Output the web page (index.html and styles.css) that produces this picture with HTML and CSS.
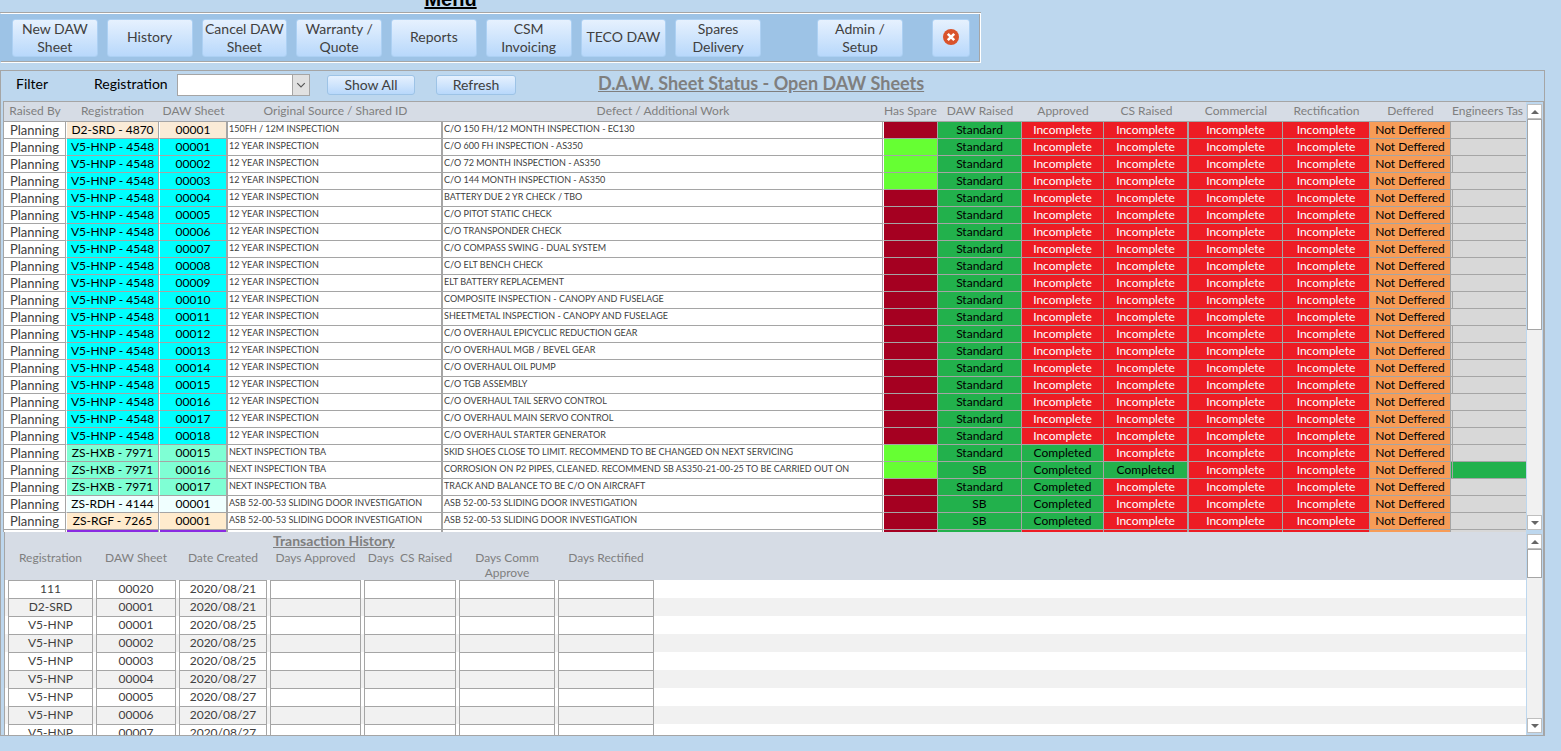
FILE: index.html
```
<!DOCTYPE html>
<html lang="en">
<head>
    <meta charset="UTF-8">
    <meta name="viewport" content="width=device-width, initial-scale=1.0">
    <title>DAW Sheets - Menu</title>
    <link rel="stylesheet" href="styles.css">
</head>
<body>
    <header class="page-title">
        <h1>Menu</h1>
    </header>

    <nav class="menu">
        <div class="menu-main">
            <button class="btn">New DAW Sheet</button>
            <button class="btn">History</button>
            <button class="btn">Cancel DAW Sheet</button>
            <button class="btn">Warranty / Quote</button>
            <button class="btn">Reports</button>
            <button class="btn">CSM Invoicing</button>
            <button class="btn">TECO DAW</button>
            <button class="btn">Spares Delivery</button>
        </div>
        <button class="btn btn-admin">Admin / Setup</button>
        <button class="btn btn-close" aria-label="Close">
            <svg width="16" height="16" viewBox="0 0 16 16">
                <circle cx="8" cy="8" r="8" fill="#d9532c"/>
                <path d="M4.800 4.800l6.400 6.400M11.200 4.800l-6.400 6.400" stroke="#fff" stroke-width="2.600"/>
            </svg>
        </button>
    </nav>

    <main class="panel">
        <div class="filter-bar">
            <span class="filter-title">Filter</span>
            <label for="registration">Registration</label>
            <span class="combo">
                <select id="registration">
                    <option></option>
                    <option>D2-SRD - 4870</option>
                    <option>V5-HNP - 4548</option>
                    <option>ZS-HXB - 7971</option>
                </select>
                <svg class="combo-arrow" width="17" height="19" viewBox="0 0 17 19">
                    <path d="M4.500 7.500l4 4 4-4" fill="none" stroke="#555" stroke-width="1.200"/>
                </svg>
            </span>
            <button class="btn btn-small btn-show">Show All</button>
            <button class="btn btn-small">Refresh</button>
            <h2>D.A.W. Sheet Status - Open DAW Sheets</h2>
        </div>

        <div class="subforms">
            <section class="pane sheets">
                <div class="pane-body">
                    <table class="sheet-table">
                        <colgroup>
                            <col class="c-by"><col class="c-reg"><col class="c-daw"><col class="c-source"><col>
                            <col class="c-spare"><col class="c-raised"><col class="c-approved"><col class="c-cs">
                            <col class="c-comm"><col class="c-rect"><col class="c-def"><col class="c-eng">
                        </colgroup>
                        <thead>
                            <tr>
                                <th>Raised By</th>
                                <th>Registration</th>
                                <th>DAW Sheet</th>
                                <th>Original Source / Shared ID</th>
                                <th>Defect / Additional Work</th>
                                <th class="cut">Has Spare</th>
                                <th>DAW Raised</th>
                                <th>Approved</th>
                                <th>CS Raised</th>
                                <th>Commercial</th>
                                <th>Rectification</th>
                                <th>Deffered</th>
                                <th class="cut">Engineers Tas</th>
                            </tr>
                        </thead>
                        <tbody id="sheet-rows"></tbody>
                    </table>
                </div>
                <div class="scrollbar">
                    <button class="arrow up" aria-label="Scroll up"></button>
                    <div class="thumb"></div>
                    <button class="arrow down" aria-label="Scroll down"></button>
                </div>
            </section>

            <section class="pane history">
                <div class="pane-body">
                    <h3>Transaction History</h3>
                    <table class="history-table">
                        <colgroup>
                            <col class="h-reg"><col class="h-daw"><col class="h-date"><col class="h-app">
                            <col class="h-cs"><col class="h-comm"><col class="h-comm"><col>
                        </colgroup>
                        <thead>
                            <tr>
                                <th>Registration</th>
                                <th>DAW Sheet</th>
                                <th>Date Created</th>
                                <th>Days Approved</th>
                                <th>Days&nbsp; CS Raised</th>
                                <th>Days Comm Approve</th>
                                <th>Days Rectified</th>
                                <th></th>
                            </tr>
                        </thead>
                        <tbody id="history-rows"></tbody>
                    </table>
                </div>
                <div class="scrollbar">
                    <button class="arrow up" aria-label="Scroll up"></button>
                    <div class="thumb thumb-short"></div>
                    <button class="arrow down" aria-label="Scroll down"></button>
                </div>
            </section>
        </div>
    </main>

    <script src="script.js"></script>
</body>
</html>
```
FILE: styles.css
```
* {
    box-sizing: border-box;
}

body {
    margin: 0;
    height: 100vh;
    display: flex;
    flex-direction: column;
    overflow: hidden;
    background: #bdd7ee;
    color: #404040;
    font-family: Lato, sans-serif;
    font-size: 12px;
}

h1, h2, h3 {
    margin: 0;
}

button {
    font-family: inherit;
    color: inherit;
}

/* title */
.page-title {
    width: 901px;
    height: 12px;
    display: flex;
    justify-content: center;
    align-items: flex-end;
}

h1 {
    color: #000;
    font: bold 20px/26px "Liberation Sans", Arial, sans-serif;
    text-decoration: underline;
}

/* menu buttons */
.menu {
    display: flex;
    align-self: flex-start;
    align-items: center;
    padding: 3px 10px 3px 11px;
    background: #9dc3e6;
    border: 1px solid #fff;
    border-left-color: #9dc3e6;
    box-shadow: 0 -1px #a5a5a5, inset 0 -1px #a5a5a5, inset -1px 0 #a5a5a5;
    height: 50px;
    margin-top: 1px;
}

.menu-main {
    display: flex;
    gap: 9px;
    width: 749px;
}

.btn {
    height: 38px;
    padding: 0 2px 2px;
    border: 1px solid #acd0f3;
    border-radius: 3px;
    background: linear-gradient(#e6f1fe, #b8d8fb);
    font-size: 14px;
    line-height: 18px;
}

.menu-main .btn {
    flex: 1;
}

.btn-admin {
    width: 86px;
    padding: 0 16px 2px;
    margin-left: 56px;
}

.btn-close {
    display: flex;
    align-items: center;
    justify-content: center;
    width: 38px;
    margin-left: 29px;
}

/* filter */
.panel {
    flex: 1;
    min-height: 0;
    display: flex;
    flex-direction: column;
    margin: 7px 16px 15px 0;
    border: 1px solid #a5a5a5;
}

.filter-bar {
    display: flex;
    align-items: center;
    flex: none;
    height: 30px;
    padding: 0 15px 6px;
    color: #000;
    font-size: 14px;
}

.filter-title {
    width: 78px;
}

.filter-bar label {
    width: 83px;
}

.combo {
    position: relative;
    display: flex;
    margin-top: 4px;
}

.combo select {
    appearance: none;
    width: 133px;
    height: 22px;
    padding: 0 20px 0 3px;
    border: 1px solid #a5a5a5;
    border-radius: 0;
    background: #fff;
}

.combo-arrow {
    position: absolute;
    top: 1px;
    right: 1px;
    height: 20px;
    background: #e1e1e1;
    border-left: 1px solid #a5a5a5;
    pointer-events: none;
}

.btn-small {
    width: 80px;
    height: 20px;
    margin: 4px 0 0 21px;
    padding-bottom: 0;
    border-color: #9dc3e6;
    color: #404040;
    line-height: 16px;
}

.btn-show {
    width: 88px;
    margin-left: 17px;
}

h2 {
    margin-left: 82px;
    color: #7f7f7f;
    font-size: 18px;
    line-height: 20px;
    text-decoration: underline;
}

/* sub forms */
.subforms {
    flex: 1;
    min-height: 0;
    display: flex;
    flex-direction: column;
    margin-left: 2px;
    border-right: 1px solid #a5a5a5;
}

.pane {
    display: flex;
    min-height: 0;
}

.pane-body {
    flex: 1;
    min-width: 0;
    overflow: hidden;
}

.sheets {
    height: 431px;
    flex: none;
    border-top: 1px solid #a5a5a5;
    border-left: 1px solid #a5a5a5;
}

.history {
    flex: 1;
    margin-left: 1px;
    border-left: 1px solid #a5a5a5;
}

table {
    width: 100%;
    table-layout: fixed;
    border-spacing: 0;
}

th {
    padding: 0;
    color: #7f7f7f;
    font-weight: normal;
}

td {
    padding: 0;
    text-align: center;
    white-space: nowrap;
    overflow: hidden;
}

.c-by { width: 62px; }
.c-reg { width: 93px; }
.c-daw { width: 69px; }
.c-source { width: 215px; }
.c-spare { width: 55px; }
.c-raised { width: 84px; }
.c-approved { width: 82px; }
.c-cs { width: 85px; }
.c-comm { width: 94px; }
.c-rect { width: 87px; }
.c-def { width: 81px; }
.c-eng { width: 75px; }

.sheet-table thead {
    background: #d6dce5;
}

.sheet-table th {
    height: 20px;
    border-bottom: 1px solid #a5a5a5;
    line-height: 18px;
    vertical-align: top;
    white-space: nowrap;
}

.sheet-table .cut {
    padding-left: 1px;
    text-align: left;
}

.sheet-table td {
    height: 17px;
    border-right: 1px solid #a5a5a5;
    border-bottom: 1px solid #a5a5a5;
    background-color: #fff;
    line-height: 16px;
}

.sheet-table .tagged {
    color: #000;
    border-left: 1px solid #fff;
}

.sheet-table .daw,
.sheet-table .source,
.sheet-table .cs {
    border-right-width: 2px;
}

.sheet-table .source,
.sheet-table .defect {
    padding-left: 1px;
    font-size: 9px;
    line-height: 14px;
    text-align: left;
    vertical-align: top;
}

.sheet-table .by {
    font-size: 13px;
}

.sheet-table .bisque { background-color: #faebd7; }
.sheet-table .cyan { background-color: #00ffff; }
.sheet-table .aqua { background-color: #7fffd4; }
.sheet-table .azure { background-color: #f0ffff; }
.sheet-table .almond { background-color: #ffebcd; }
.sheet-table .violet { background-color: #8a2be2; }

.sheet-table .spare-no,
.sheet-table .spare-yes {
    border-left: 1px solid #fff;
}

.sheet-table .spare-no { background-color: #a50021; }
.sheet-table .spare-yes { background-color: #66ff33; }

.sheet-table .done {
    color: #000;
    background-color: #22b14c;
}

.sheet-table .open {
    color: #fff;
    background-color: #ed1c24;
}

.sheet-table .deferred {
    color: #000;
    background-color: #f79c57;
}

.sheet-table .task {
    border-right: 0;
    background-color: #d8d8d8;
}

.sheet-table .task-done {
    background-color: #22b14c;
}

/* double divider in front of the engineers task */
.sheet-table .task-line {
    background-image: linear-gradient(#a5a5a5, #a5a5a5);
    background-size: 1px 100%;
    background-position: 1px 0;
    background-repeat: no-repeat;
}

/* history */
.history .pane-body {
    background: #d6dce5;
}

h3 {
    padding-left: 268px;
    color: #7f7f7f;
    font-size: 14px;
    line-height: 18px;
    text-decoration: underline;
}

/* striped from below the header, so the gaps between cells are striped too */
.history-table {
    border-spacing: 3px 0;
    background: repeating-linear-gradient(#fff 0 18px, #f1f1f1 18px 36px) 0 30px no-repeat;
}

.h-reg { width: 85px; }
.h-daw { width: 80px; }
.h-date { width: 88px; }
.h-app { width: 91px; }
.h-cs { width: 92px; }
.h-comm { width: 96px; }

.history-table th {
    height: 30px;
    line-height: 15px;
    vertical-align: top;
}

.history-table td {
    height: 18px;
    border: 1px solid #a5a5a5;
    border-bottom: 0;
    line-height: 16px;
    vertical-align: top;
}

.history-table td:last-child {
    border: 0;
}

/* scrollbars */
.scrollbar {
    display: flex;
    flex-direction: column;
    flex: none;
    width: 17px;
    padding: 2px 1px;
    background: linear-gradient(#f1f1f1, #f1f1f1) content-box #fff;
}

.arrow {
    display: flex;
    align-items: center;
    justify-content: center;
    width: 15px;
    height: 15px;
    padding: 0;
    border: 1px solid #bfbfbf;
    background: #fff;
}

.arrow::before {
    content: "";
    border: 4px solid transparent;
}

.up::before {
    border-top: 0;
    border-bottom-color: #666;
}

.down::before {
    border-bottom: 0;
    border-top-color: #666;
}

.down {
    margin-top: auto;
}

.thumb {
    height: 211px;
    border: 1px solid #a5a5a5;
    background: #fff;
}

.thumb-short {
    height: 29px;
}
```
FILE: script.js
```
// registration, colour, sheet no, source, defect, spares, raised, approved, cs raised
const HNP = "V5-HNP - 4548";
const HXB = "ZS-HXB - 7971";
const YEAR = "12 YEAR INSPECTION";
const NEXT = "NEXT INSPECTION TBA";
const ASB = "ASB 52-00-53 SLIDING DOOR INVESTIGATION";

const sheets = [
    ["D2-SRD - 4870", "bisque", "00001", "150FH / 12M INSPECTION", "C/O 150 FH/12 MONTH INSPECTION - EC130", 0, "Standard", 0, 0],
    [HNP, "cyan", "00001", YEAR, "C/O 600 FH INSPECTION - AS350", 1, "Standard", 0, 0],
    [HNP, "cyan", "00002", YEAR, "C/O 72 MONTH INSPECTION - AS350", 1, "Standard", 0, 0],
    [HNP, "cyan", "00003", YEAR, "C/O 144 MONTH INSPECTION - AS350", 1, "Standard", 0, 0],
    [HNP, "cyan", "00004", YEAR, "BATTERY DUE 2 YR CHECK / TBO", 0, "Standard", 0, 0],
    [HNP, "cyan", "00005", YEAR, "C/O PITOT STATIC CHECK", 0, "Standard", 0, 0],
    [HNP, "cyan", "00006", YEAR, "C/O TRANSPONDER CHECK", 0, "Standard", 0, 0],
    [HNP, "cyan", "00007", YEAR, "C/O COMPASS SWING - DUAL SYSTEM", 0, "Standard", 0, 0],
    [HNP, "cyan", "00008", YEAR, "C/O ELT BENCH CHECK", 0, "Standard", 0, 0],
    [HNP, "cyan", "00009", YEAR, "ELT BATTERY REPLACEMENT", 0, "Standard", 0, 0],
    [HNP, "cyan", "00010", YEAR, "COMPOSITE INSPECTION - CANOPY AND FUSELAGE", 0, "Standard", 0, 0],
    [HNP, "cyan", "00011", YEAR, "SHEETMETAL INSPECTION - CANOPY AND FUSELAGE", 0, "Standard", 0, 0],
    [HNP, "cyan", "00012", YEAR, "C/O OVERHAUL EPICYCLIC REDUCTION GEAR", 0, "Standard", 0, 0],
    [HNP, "cyan", "00013", YEAR, "C/O OVERHAUL MGB / BEVEL GEAR", 0, "Standard", 0, 0],
    [HNP, "cyan", "00014", YEAR, "C/O OVERHAUL OIL PUMP", 0, "Standard", 0, 0],
    [HNP, "cyan", "00015", YEAR, "C/O TGB ASSEMBLY", 0, "Standard", 0, 0],
    [HNP, "cyan", "00016", YEAR, "C/O OVERHAUL TAIL SERVO CONTROL", 0, "Standard", 0, 0],
    [HNP, "cyan", "00017", YEAR, "C/O OVERHAUL MAIN SERVO CONTROL", 0, "Standard", 0, 0],
    [HNP, "cyan", "00018", YEAR, "C/O OVERHAUL STARTER GENERATOR", 0, "Standard", 0, 0],
    [HXB, "aqua", "00015", NEXT, "SKID SHOES CLOSE TO LIMIT. RECOMMEND TO BE CHANGED ON NEXT SERVICING", 1, "Standard", 1, 0],
    [HXB, "aqua", "00016", NEXT, "CORROSION ON P2 PIPES, CLEANED. RECOMMEND SB AS350-21-00-25 TO BE CARRIED OUT ON", 1, "SB", 1, 1],
    [HXB, "aqua", "00017", NEXT, "TRACK AND BALANCE TO BE C/O ON AIRCRAFT", 0, "Standard", 1, 0],
    ["ZS-RDH - 4144", "azure", "00001", ASB, ASB, 0, "SB", 1, 0],
    ["ZS-RGF - 7265", "almond", "00001", ASB, ASB, 0, "SB", 1, 0],
    ["", "violet", "", "", "", 0, "", 0, 0]
];

// rows that have the double divider before the engineers task
const dividerRows = [2, 4, 5, 6, 7, 10, 12, 13, 14, 15, 17, 18, 19, 20];

function statusCell(done, extra) {
    return `<td class="${done ? "done" : "open"} ${extra || ""}">${done ? "Completed" : "Incomplete"}</td>`;
}

document.getElementById("sheet-rows").innerHTML = sheets.map((s, i) => {
    const [reg, colour, no, source, defect, spares, raised, approved, cs] = s;
    const line = dividerRows.includes(i) ? "task-line" : "";
    const task = i === 20 ? "task-done" : "";
    return `<tr>
        <td class="by">${reg ? "Planning" : ""}</td>
        <td class="tagged ${colour}">${reg}</td>
        <td class="tagged daw ${colour}">${no}</td>
        <td class="source">${source}</td>
        <td class="defect">${defect}</td>
        <td class="${spares ? "spare-yes" : "spare-no"}"></td>
        <td class="done">${raised}</td>
        ${reg ? statusCell(approved) : '<td class="open"></td>'}
        ${reg ? statusCell(cs, "cs") : '<td class="open cs"></td>'}
        ${reg ? statusCell(0) : '<td class="open"></td>'}
        ${reg ? statusCell(0) : '<td class="open"></td>'}
        <td class="deferred">${reg ? "Not Deffered" : ""}</td>
        <td class="task ${task} ${line}"></td>
    </tr>`;
}).join("");

const history = [
    ["111", "00020", "2020/08/21"],
    ["D2-SRD", "00001", "2020/08/21"],
    ["V5-HNP", "00001", "2020/08/25"],
    ["V5-HNP", "00002", "2020/08/25"],
    ["V5-HNP", "00003", "2020/08/25"],
    ["V5-HNP", "00004", "2020/08/27"],
    ["V5-HNP", "00005", "2020/08/27"],
    ["V5-HNP", "00006", "2020/08/27"],
    ["V5-HNP", "00007", "2020/08/27"]
];

document.getElementById("history-rows").innerHTML = history.map(h =>
    `<tr>${h.map(v => `<td>${v}</td>`).join("")}${"<td></td>".repeat(5)}</tr>`
).join("");
```
